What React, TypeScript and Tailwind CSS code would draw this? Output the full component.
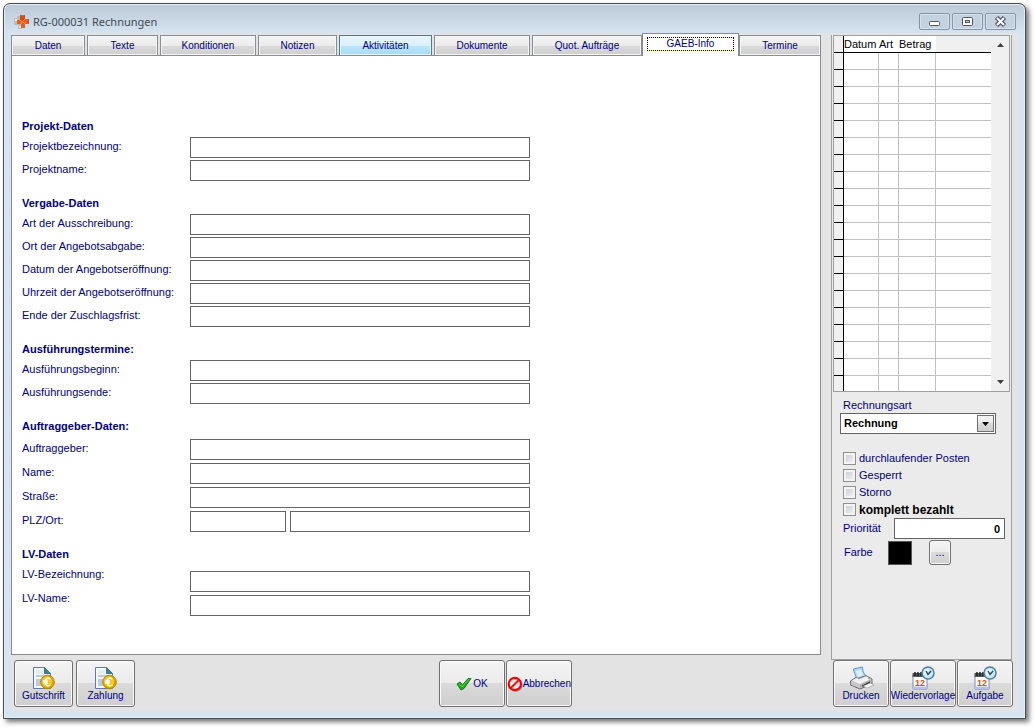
import React, { useState } from "react";

type Tab = { name: string; width: string };

const tabs: Tab[] = [
  { name: "Daten", width: "basis-[74px] mr-0.5" },
  { name: "Texte", width: "basis-[71px] mr-0.5" },
  { name: "Konditionen", width: "basis-[96px] mr-0.5" },
  { name: "Notizen", width: "basis-[79px] mr-0.5" },
  { name: "Aktivitäten", width: "basis-[93px] mr-0.5" },
  { name: "Dokumente", width: "basis-[96px] mr-0.5" },
  { name: "Quot. Aufträge", width: "basis-[110px]" },
  { name: "GAEB-Info", width: "basis-[97px]" },
  { name: "Termine", width: "basis-[82px]" },
];

const inputClass =
  "h-[21px] min-w-0 border border-[#646464] bg-white px-1 text-[11px] text-black outline-none";

const grayFace =
  "bg-[linear-gradient(#f4f4f4_0%,#ebebeb_50%,#dadada_50%,#cfcfcf_100%)]";

const AppLogo = () => (
  <svg width="15" height="16" viewBox="0 0 15 16">
    <path d="M0 4h3V2h4v4h4v5H8v4H4v-4H0z" fill="#b9bcc0" />
    <path d="M1 5h2v2H1zM5 12h2v2H5z" fill="#e6e8ea" />
    <path d="M6 1h5v4h4v5h-4v4H7v-4H3V6h3z" fill="#e8601f" />
    <path d="M6 1l2.500 2L11 1v4L9 7.500 6 6zM15 5l-2 2.500 2 2.500z" fill="#d14c14" />
    <path d="M6 6l2.500 1.500L11 5M7 10l1.500-2.500L11 10" stroke="#f58a52" fill="none" />
  </svg>
);

const InvoiceIcon = () => (
  <svg width="23" height="24" viewBox="0 0 23 24">
    <path d="M1.500 1.500h11l6 6v15h-17z" fill="#f4f8fd" stroke="#5f78b0" />
    <path d="M12.500 1.500v6h6z" fill="#3e8296" stroke="#3e6f96" />
    <path d="M4 5h7M4 7h7" stroke="#d3deec" />
    <path d="M4 9h12v2H4zM4 13h5v7H4z" fill="#bccbe0" />
    <circle cx="15.500" cy="16" r="6.800" fill="#dba400" stroke="#b98500" />
    <circle cx="15" cy="15.500" r="5.200" fill="#f3c62a" />
    <path
      d="M18.500 13c-3-2-5.500 0-5.500 3s2.500 5 5.500 3M11 15h5M11 17h5"
      fill="none"
      stroke="#fff"
      strokeWidth="1.500"
    />
  </svg>
);

const PrinterIcon = () => (
  <svg width="25" height="24" viewBox="0 0 25 24">
    <path d="M4.500 3l9-2c0 4 1 6 3.500 9l-9 3c-1-3-3-6-3.500-10z" fill="#b7dcfb" stroke="#5f91e8" />
    <path d="M7 5l5-1 2 5-5 2z" fill="#dff0ff" />
    <path d="M1.500 15l6-4 1.500 1.500 8-3 6 3.500v5l-12 5-9.500-4z" fill="#c9c9c9" stroke="#6f6f6f" />
    <path d="M3 14.500l5-2.500 2 1.500 7-3 5 2.500-11 5z" fill="#f2f2f2" />
    <path d="M11 18.500l11-5v3.500l-11 5z" fill="#aeaeae" />
    <path d="M13 19.500l8-4v2l-7 3.500z" fill="#222" />
    <path d="M14 20l7-3 4 2-7 3z" fill="#fff" stroke="#888" strokeWidth=".5" />
    <circle cx="20" cy="12.500" r=".8" fill="#49a849" />
  </svg>
);

const CalendarIcon = () => (
  <svg width="24" height="24" viewBox="0 0 24 24">
    <path d="M2 9h14v14H2z" fill="#fff" stroke="#7d83c5" />
    <path d="M1.500 7h15v4h-15z" fill="#555" />
    <path d="M4 6v4M7 6v4M10 6v4" stroke="#222" strokeWidth="1.500" />
    <path d="M2 20.500h14V23H2z" fill="#b9bfe6" />
    <text
      x="4"
      y="20"
      fontSize="9"
      fontWeight="bold"
      fontFamily="Liberation Sans, sans-serif"
      fill="#ef4a0c"
    >
      12
    </text>
    <circle cx="17" cy="7" r="6" fill="#c5e8fa" stroke="#537d9f" strokeWidth="1.500" />
    <circle cx="16" cy="6" r="3" fill="#e5f7ff" />
    <path d="M15 5l2 3.500L20 5" fill="none" stroke="#234" strokeWidth="1.300" />
  </svg>
);

const CheckIcon = () => (
  <svg width="16" height="14" viewBox="0 0 16 14">
    <path
      d="M1 7l3-2 2.500 3L12 1.500h3L8 11.500 5 13z"
      fill="#22a722"
      stroke="#137d13"
      strokeLinejoin="round"
    />
    <path d="M3 7l3 3 7-8" fill="none" stroke="#60d344" />
  </svg>
);

const CancelIcon = () => (
  <svg width="16" height="16" viewBox="0 0 16 16">
    <circle cx="9" cy="9" r="6" fill="none" stroke="#8b8b8b" strokeWidth="2" />
    <circle cx="8" cy="8" r="6.300" fill="#e8e8e8" stroke="#f00" strokeWidth="2.200" />
    <path d="M4 12l8-8" stroke="#f00" strokeWidth="2" />
  </svg>
);

const WindowButton: React.FC<{ label: string; children: React.ReactNode }> = ({
  label,
  children,
}) => (
  <button
    type="button"
    aria-label={label}
    className="flex h-[17px] w-[31px] items-center justify-center rounded-[2px] border border-[#8493a8] bg-[#c4d1df] shadow-[inset_0_0_0_1px_#d6e1ec]"
  >
    <svg width="13" height="11" viewBox="0 0 13 11">
      {children}
    </svg>
  </button>
);

const ToolButton: React.FC<{
  label: string;
  icon: React.ReactNode;
  className: string;
}> = ({ label, icon, className }) => (
  <button
    type="button"
    className={`flex h-[47px] items-center justify-center rounded-[3px] border border-[#707070] text-[10px] leading-3 whitespace-nowrap shadow-[inset_0_0_0_1px_#fafafa] ${grayFace} ${className}`}
  >
    {icon}
    <span>{label}</span>
  </button>
);

const Section: React.FC<{
  title: string;
  rows: string[];
  headingClass?: string;
  rowsClass?: string;
  labelClass?: string;
}> = ({
  title,
  rows,
  headingClass = "",
  rowsClass = "gap-0.5",
  labelClass = "",
}) => (
  <section>
    <h2 className={`text-[11px] leading-[21px] font-bold ${headingClass}`}>
      {title}
    </h2>
    <div className={`flex flex-col ${rowsClass}`}>
      {rows.map((row) => (
        <div key={row} className="flex h-[21px] items-start">
          <label
            htmlFor={row}
            className={`w-[168px] shrink-0 text-[11px] leading-[18px] ${labelClass}`}
          >
            {row}
          </label>
          {row === "PLZ/Ort:" ? (
            <div className="flex w-[340px] gap-1">
              <input id={row} type="text" className={`w-24 ${inputClass}`} />
              <input
                type="text"
                aria-label="Ort"
                className={`flex-1 ${inputClass}`}
              />
            </div>
          ) : (
            <input id={row} type="text" className={`w-[340px] ${inputClass}`} />
          )}
        </div>
      ))}
    </div>
  </section>
);

const CheckRow: React.FC<{ label: string; className?: string }> = ({
  label,
  className = "text-[11px]",
}) => (
  <label className={`flex h-[17px] items-center gap-[3px] ${className}`}>
    <input
      type="checkbox"
      className="size-[13px] appearance-none border border-[#8e8f8f] bg-[linear-gradient(135deg,#c3c8ce,#f6f6f6)] shadow-[inset_0_0_0_2px_#f4f4f4] checked:bg-[#000080]"
    />
    {label}
  </label>
);

const App: React.FC = () => {
  const [activeTab, setActiveTab] = useState<string>("GAEB-Info");
  const [priority, setPriority] = useState<string>("0");

  const tabFace = (name: string) => {
    if (name === activeTab) {
      return "-mb-px h-[23px] border-b-0 border-[#898c95] bg-white px-1 pt-0.5 pb-1";
    }
    if (name === "Aktivitäten") {
      return "h-5 border-b-0 border-[#3c7fb1] bg-[linear-gradient(#eaf6fd_0%,#d9f0fc_50%,#bee6fd_50%,#a7d9f5_100%)] shadow-[inset_0_0_0_1px_#e6f5fd]";
    }
    return `h-5 border-b-0 border-[#898c95] shadow-[inset_0_0_0_1px_#f5f5f5] ${grayFace}`;
  };

  return (
    <div className="flex min-h-screen bg-white pt-[3px] pr-2 pb-2 pl-[3px] font-['Liberation_Sans',Arial,sans-serif] text-[#000080]">
      <div className="flex flex-1 flex-col rounded-t-[7px] border border-[#4a4c50] bg-[#d6e3f1] bg-[linear-gradient(#bccad8,#d6e3f1_30px)] px-[7px] pb-[7px] shadow-[3px_3px_5px_rgba(0,0,0,0.55),inset_0_0_0_1px_#e4ecf4]">
        <header className="flex h-[29px] items-center justify-between pt-1.5 pr-0.5 pl-[3px]">
          <div className="flex items-center gap-1">
            <AppLogo />
            <h1 className="font-['Noto_Sans',sans-serif] text-[11px] leading-4 text-[#3f4a55]">
              RG-000031 Rechnungen
            </h1>
          </div>
          <div className="flex gap-0.5">
            <WindowButton label="Minimieren">
              <rect x="1.500" y="5.500" width="10" height="4" rx="1" fill="#fff" stroke="#4f5661" />
            </WindowButton>
            <WindowButton label="Maximieren">
              <rect x="1.500" y="1.500" width="10" height="8" rx="1" fill="#fff" stroke="#4f5661" />
              <rect x="4.500" y="4.500" width="4" height="2" fill="#c4d1df" stroke="#4f5661" />
            </WindowButton>
            <WindowButton label="Schließen">
              <path d="M2.500 1.500l8 8M10.500 1.500l-8 8" stroke="#4f5661" strokeWidth="4.500" />
              <path d="M3 2l7 7M10 2l-7 7" stroke="#fff" strokeWidth="2" />
            </WindowButton>
          </div>
        </header>

        <main className="flex flex-1 flex-col bg-[#e3e3e3] pb-1">
          <div className="flex flex-1 gap-2.5 pr-1.5">
            <div className="mb-[5px] flex min-w-0 flex-1 flex-col">
              <div role="tablist" className="flex h-[22px] items-end">
                {tabs.map((tab) => (
                  <button
                    key={tab.name}
                    type="button"
                    role="tab"
                    aria-selected={tab.name === activeTab}
                    onClick={() => setActiveTab(tab.name)}
                    className={`relative grow border text-[10px] leading-3 whitespace-nowrap ${tab.width} ${tabFace(tab.name)}`}
                  >
                    {tab.name === activeTab ? (
                      <span className="block border border-dotted border-black bg-[#ffff66]">
                        <span className="block bg-white">{tab.name}</span>
                      </span>
                    ) : (
                      tab.name
                    )}
                  </button>
                ))}
              </div>

              <form
                onSubmit={(e) => e.preventDefault()}
                className="flex flex-1 flex-col gap-3 border border-[#898c95] bg-white px-2.5 pt-[60px] pb-6"
              >
                <Section
                  title="Projekt-Daten"
                  rows={["Projektbezeichnung:", "Projektname:"]}
                />
                <Section
                  title="Vergabe-Daten"
                  rows={[
                    "Art der Ausschreibung:",
                    "Ort der Angebotsabgabe:",
                    "Datum der Angebotseröffnung:",
                    "Uhrzeit der Angebotseröffnung:",
                    "Ende der Zuschlagsfrist:",
                  ]}
                />
                <Section
                  title="Ausführungstermine:"
                  rows={["Ausführungsbeginn:", "Ausführungsende:"]}
                />
                <Section
                  title="Auftraggeber-Daten:"
                  rows={["Auftraggeber:", "Name:", "Straße:", "PLZ/Ort:"]}
                  headingClass="pb-0.5"
                  rowsClass="gap-[3px]"
                />
                <Section
                  title="LV-Daten"
                  rows={["LV-Bezeichnung:", "LV-Name:"]}
                  headingClass="pb-1.5"
                  rowsClass="gap-[3px]"
                  labelClass="-mt-1.5"
                />
              </form>
            </div>

            <aside className="mt-0.5 flex w-[181px] shrink-0 flex-col border-x border-b border-[#a0a0a0] bg-[#ebebeb] px-px">
              <div className="flex border border-[#a0a0a0] bg-white">
                <table className="flex-1 table-fixed border-separate border-spacing-0 text-[11px] leading-[16px] text-black">
                  <colgroup>
                    <col className="w-2.5" />
                    <col className="w-[35px]" />
                    <col className="w-5" />
                    <col className="w-[37px]" />
                    <col />
                  </colgroup>
                  <thead>
                    <tr className="h-[17px] bg-white text-left">
                      <th className="border-r border-b border-black bg-[#f0f0f0] p-0" />
                      <th className="border-b border-black p-0 font-normal">Datum</th>
                      <th className="border-b border-black p-0 font-normal">Art</th>
                      <th className="border-b border-black p-0 font-normal">Betrag</th>
                      <th className="border-b border-black bg-[#f0f0f0] p-0" />
                    </tr>
                  </thead>
                  <tbody>
                    {Array.from({ length: 19 }, (_, i) => (
                      <tr key={i} className="h-[17px]">
                        <td className="border-r border-b border-black bg-[#f0f0f0] p-0" />
                        <td className="border-r border-b border-[#c0c0c0] p-0" />
                        <td className="border-r border-b border-[#c0c0c0] p-0" />
                        <td className="border-r border-b border-[#c0c0c0] p-0" />
                        <td className="border-b border-[#c0c0c0] p-0" />
                      </tr>
                    ))}
                    <tr className="h-[15px]">
                      <td className="border-r border-black bg-[#f0f0f0] p-0" />
                      <td className="border-r border-[#c0c0c0] p-0" />
                      <td className="border-r border-[#c0c0c0] p-0" />
                      <td className="border-r border-[#c0c0c0] p-0" />
                      <td className="p-0" />
                    </tr>
                  </tbody>
                </table>
                <div className="flex w-[18px] shrink-0 flex-col items-center justify-between bg-[#f0f0f0] py-[7px]">
                  <svg width="7" height="4" viewBox="0 0 7 4">
                    <path d="M0 4l3.500-4L7 4z" fill="#404040" />
                  </svg>
                  <svg width="7" height="4" viewBox="0 0 7 4">
                    <path d="M0 0l3.500 4L7 0z" fill="#404040" />
                  </svg>
                </div>
              </div>

              <div className="flex flex-col pt-[5px] pr-[5px] pl-[7px]">
                <label
                  htmlFor="rechnungsart"
                  className="pl-[3px] text-[11px] leading-4"
                >
                  Rechnungsart
                </label>
                <div className="relative mr-[9px] mb-4">
                  <select
                    id="rechnungsart"
                    className="block h-[21px] w-full appearance-none border border-[#646464] bg-white px-[3px] text-[11px] font-bold text-black outline-none"
                  >
                    <option>Rechnung</option>
                  </select>
                  <span
                    className={`pointer-events-none absolute top-0.5 right-0.5 flex h-[17px] w-[17px] items-center justify-center border border-[#707070] ${grayFace}`}
                  >
                    <svg width="7" height="4" viewBox="0 0 7 4">
                      <path d="M0 0h7L3.500 4z" fill="#000" />
                    </svg>
                  </span>
                </div>
                <div className="flex flex-col pl-[3px]">
                  <CheckRow label="durchlaufender Posten" />
                  <CheckRow label="Gesperrt" />
                  <CheckRow label="Storno" />
                  <CheckRow
                    label="komplett bezahlt"
                    className="text-[12px] font-bold text-black"
                  />
                </div>
                <div className="flex items-center justify-between pl-[3px] text-[11px]">
                  <label htmlFor="prioritaet">Priorität</label>
                  <input
                    id="prioritaet"
                    type="text"
                    value={priority}
                    onChange={(e) => setPriority(e.target.value)}
                    className={`w-[111px] text-right font-bold ${inputClass}`}
                  />
                </div>
                <div className="mt-px flex items-center pl-1 text-[11px]">
                  <span className="w-11">Farbe</span>
                  <span className="size-6 border border-[#555] bg-black" />
                  <button
                    type="button"
                    aria-label="Farbe wählen"
                    className={`ml-[17px] h-[25px] w-[22px] rounded-[3px] border border-[#707070] shadow-[inset_0_0_0_1px_#fafafa] ${grayFace}`}
                  >
                    ...
                  </button>
                </div>
              </div>
            </aside>
          </div>

          <footer className="grid grid-cols-[1fr_auto_1fr] pr-[5px] pl-[3px]">
            <div className="flex gap-[3px]">
              <ToolButton label="Gutschrift" icon={<InvoiceIcon />} className="w-[59px] flex-col" />
              <ToolButton label="Zahlung" icon={<InvoiceIcon />} className="w-[59px] flex-col" />
            </div>
            <div className="mr-4 flex gap-px">
              <ToolButton label="OK" icon={<CheckIcon />} className="w-[66px] gap-px" />
              <ToolButton label="Abbrechen" icon={<CancelIcon />} className="w-[66px]" />
            </div>
            <div className="flex justify-end gap-px">
              <ToolButton label="Drucken" icon={<PrinterIcon />} className="w-[56px] flex-col" />
              <ToolButton label="Wiedervorlage" icon={<CalendarIcon />} className="w-[66px] flex-col" />
              <ToolButton label="Aufgabe" icon={<CalendarIcon />} className="w-[56px] flex-col" />
            </div>
          </footer>
        </main>
      </div>
    </div>
  );
};

export default App;
